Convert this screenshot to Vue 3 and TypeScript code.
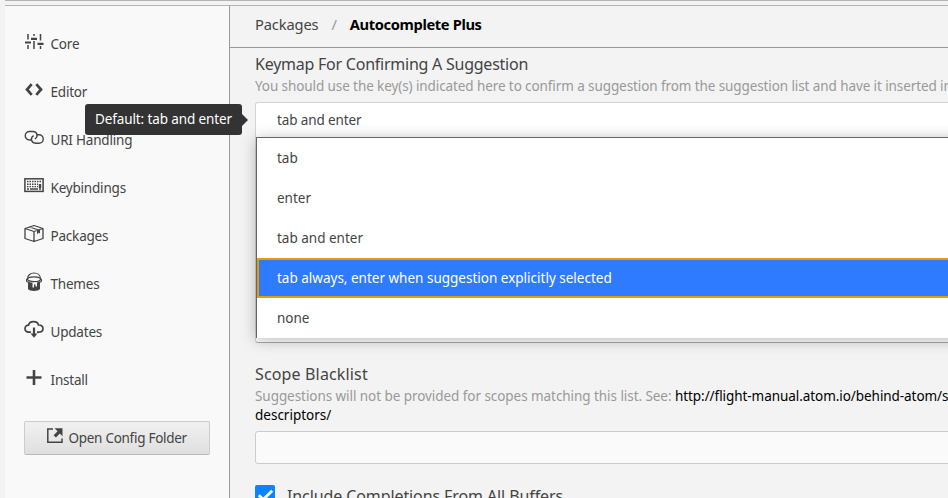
<script setup lang="ts">
interface NavItem {
  id: string
  label: string
}

const navItems: NavItem[] = [
  { id: 'core', label: 'Core' },
  { id: 'editor', label: 'Editor' },
  { id: 'uri', label: 'URI Handling' },
  { id: 'keys', label: 'Keybindings' },
  { id: 'packages', label: 'Packages' },
  { id: 'themes', label: 'Themes' },
  { id: 'updates', label: 'Updates' },
  { id: 'install', label: 'Install' },
]

const options: string[] = [
  'tab',
  'enter',
  'tab and enter',
  'tab always, enter when suggestion explicitly selected',
  'none',
]
const highlighted = 3
</script>

<template>
  <div class="window">
    <div class="topbar"></div>
    <div class="body">
      <aside class="sidebar">
        <nav class="menu">
          <a v-for="item in navItems" :key="item.id" class="menu-item">
            <svg class="icon" width="20" height="20" viewBox="0 0 20 20" fill="none" stroke="currentColor">
              <g v-if="item.id === 'core'">
                <path d="M4 2v5.500M4 13v4M10 2v2M10 9v8M16.500 2v6.500M16.500 14v3" stroke-width="1.500" />
                <path d="M1 10.500h6M7 6.800h6M13.500 11.800h6" stroke-width="2.200" />
              </g>
              <path v-else-if="item.id === 'editor'" d="M7.700 4.200L3 9.500l4.700 5.300M12.300 4.200L17 9.500l-4.700 5.300" stroke-width="2.700" />
              <g v-else-if="item.id === 'uri'" stroke-width="1.400">
                <path d="M7 12H5.500a4.200 4.200 0 0 1 0-8.500H9c4.500 0 5.500 5.500 1.800 7.500" />
                <path d="M13 6.700h2a4.200 4.200 0 0 1 0 8.500h-3.500c-4.500 0-5.500-5.500-1.800-7.500" />
              </g>
              <g v-else-if="item.id === 'keys'">
                <rect x="0.900" y="2.800" width="18.200" height="12.600" stroke-width="1.500" />
                <path d="M3 5.500h14M3 8.300h11" stroke-width="1.600" stroke-dasharray="1.500 1" />
                <path d="M3 10.700h11" stroke-width="1.200" stroke-dasharray="1.500 1" />
                <path d="M3 13h2M6 13h8M15 13h2" stroke-width="1.300" />
                <path d="M16 8v4" stroke-width="2.400" />
              </g>
              <g v-else-if="item.id === 'packages'" stroke-width="1.300" stroke-linejoin="round">
                <path d="M1 4.500l9-3 9 3v10l-9 3-9-3zM1 4.500l9 3 9-3M10 7.500v10M5.500 3l9 3" />
                <path d="M13 6.200l3-.9v4.200l-1.500-.8-1.500 1.600z" fill="currentColor" stroke="none" />
              </g>
              <g v-else-if="item.id === 'themes'" stroke-width="1.200">
                <path d="M3.500 7C3.500 -1 16.500 -1 16.500 7" />
                <ellipse cx="10" cy="7.200" rx="6.500" ry="2.400" />
                <path d="M3.500 6.500C1.800 7.500 2.300 10 4 10M16.500 6.500c1.700 1 1.200 3.500-.5 3.500" />
                <path d="M4 9v8c1.500 2.500 10.500 2.500 12 0V9c-1 1-2.500 1.400-3 1.500v4h-1.500v-2H10v3H8.500v-5C6.500 10.500 5 10 4 9z" fill="currentColor" stroke="none" />
              </g>
              <g v-else-if="item.id === 'updates'" stroke-width="1.700">
                <path d="M7 12.200H4.500a3.500 3.500 0 0 1 0-7C5.500 0.500 13.500 0.500 14.500 5c6-.3 6 7.200 0 7.200H13" />
                <path d="M10 7.500v8" stroke-width="2.200" />
                <path d="M6.500 13.500h7L10 17.800z" fill="currentColor" stroke="none" />
              </g>
              <path v-else d="M10 2v15M2.500 9.500h15" stroke-width="2.600" />
            </svg>
            <span class="menu-label">{{ item.label }}</span>
          </a>
        </nav>
        <button class="config-button">
          <svg class="icon" width="18" height="18" viewBox="0 0 18 18" fill="none" stroke="currentColor">
            <path d="M7 2H1.800v13.200H16V11.500" stroke-width="1.500" />
            <path d="M8.500 1.200h8v8l-2.600-2.600-4 3.900-2.300-2.300 4-3.900z" fill="currentColor" stroke="none" />
          </svg>
          <span class="config-label">Open Config Folder</span>
        </button>
      </aside>

      <main class="panel">
        <header class="breadcrumb">
          <span class="crumb">Packages</span>
          <span class="slash">/</span>
          <span class="current">Autocomplete Plus</span>
        </header>

        <section class="setting keymap">
          <h3 class="title t-keymap">Keymap For Confirming A Suggestion</h3>
          <p class="description d-keymap">You should use the key(s) indicated here to confirm a suggestion from the suggestion list and have it inserted in</p>
          <div class="select-wrap">
            <div class="select"><span>tab and enter</span></div>
            <div class="tooltip"><span>Default: tab and enter</span></div>
            <div class="dropdown">
              <div
                v-for="(option, i) in options"
                :key="option"
                class="option"
                :class="{ active: i === highlighted }"
              ><span>{{ option }}</span></div>
            </div>
          </div>
        </section>

        <section class="setting scope">
          <h3 class="title t-scope">Scope Blacklist</h3>
          <p class="description d-scope">Suggestions will not be provided for scopes matching this list. See: <a class="link">http://flight-manual.atom.io/behind-atom/s</a></p>
          <p class="description"><a class="link">descriptors/</a></p>
          <div class="text-input"></div>
        </section>

        <label class="check-row">
          <span class="checkbox">
            <svg width="20" height="20" viewBox="0 0 20 20" fill="none" stroke="#fff">
              <path d="M3.800 10.200l4.400 4.300 9-8.800" stroke-width="2.800" />
            </svg>
          </span>
          <span class="title t-check">Include Completions From All Buffers</span>
        </label>
      </main>
    </div>
  </div>
</template>

<style>
body {
  overflow: hidden;
}
</style>

<style scoped>
.window {
  box-sizing: border-box;
  width: 948px;
  height: 498px;
  padding-left: 5px;
  overflow: hidden;
  display: flex;
  flex-direction: column;
  background: #f3f3f3;
  color: #444;
  font-family: "Noto Sans", sans-serif;
  font-size: 13.500px;
}
.topbar {
  flex: none;
  height: 4px;
  border-top: 1px solid #b4b4b4;
  border-bottom: 1px solid #b4b4b4;
}
.body {
  flex: 1;
  min-height: 0;
  display: flex;
}
.sidebar {
  flex: none;
  width: 224px;
  border-right: 1px solid #999;
  background: #f9f9f9;
}
.menu {
  display: flex;
  flex-direction: column;
  padding: 14px 19px 0;
}
.menu-item {
  display: flex;
  align-items: center;
  gap: 6.500px;
  height: 48px;
  letter-spacing: -0.200px;
}
.menu-item .icon {
  margin-top: -4px;
}
.icon {
  flex: none;
  color: #444;
}
.config-button {
  display: flex;
  box-sizing: border-box;
  width: 186px;
  height: 34px;
  margin: 17px 0 0 19px;
  padding: 0 0 0 21px;
  align-items: center;
  gap: 4.500px;
  border: 1px solid #ccc;
  border-bottom-color: #b9b9b9;
  border-radius: 2px;
  background: linear-gradient(#f1f1f1, #dfdfdf);
  color: #444;
  font: inherit;
  letter-spacing: -0.280px;
  white-space: nowrap;
}
.config-button .icon {
  margin-top: -4px;
}
.panel {
  flex: 1;
  min-width: 0;
  white-space: nowrap;
}
.breadcrumb {
  box-sizing: border-box;
  height: 42px;
  padding: 0 0 5px 25px;
  display: flex;
  align-items: center;
  border-bottom: 1px solid #999;
  font-size: 14.700px;
  letter-spacing: -0.150px;
}
.slash {
  margin: 0 13px;
  color: #999;
}
.current {
  color: #000;
  font-weight: 700;
  letter-spacing: -0.370px;
}
.setting {
  padding-left: 25px;
}
.title {
  margin: 0;
  font-size: 16px;
  font-weight: 400;
  line-height: 24px;
}
.t-keymap {
  letter-spacing: -0.240px;
}
.t-scope {
  letter-spacing: 0.150px;
}
.t-check {
  margin-top: -1px;
  letter-spacing: -0.100px;
}
.keymap {
  padding-top: 4px;
}
.description {
  margin: 0;
  color: #999;
  line-height: 19px;
}
.d-keymap {
  padding-top: 1px;
  letter-spacing: -0.095px;
}
.d-scope {
  padding-top: 1px;
  letter-spacing: -0.060px;
}
.link {
  color: #000;
}
.select-wrap {
  position: relative;
  width: 800px;
  margin-top: 6px;
}
.select {
  box-sizing: border-box;
  height: 241px;
  padding: 8px 21px;
  border: 1px solid #d3d3d3;
  border-bottom-color: #aaa;
  border-radius: 3px;
  background: #fff;
  line-height: 18px;
  letter-spacing: -0.120px;
}
.tooltip {
  position: absolute;
  left: -170px;
  top: 2px;
  width: 157px;
  height: 31px;
  box-sizing: border-box;
  padding-left: 10px;
  border-radius: 3px;
  background: #333;
  color: #fff;
  line-height: 30px;
  letter-spacing: -0.120px;
}
.tooltip::after {
  content: "";
  position: absolute;
  left: 157px;
  top: 10px;
  border: 6px solid transparent;
  border-left-color: #333;
  border-right: 0;
}
.dropdown {
  position: absolute;
  left: 1px;
  top: 35px;
  width: 798px;
  height: 200px;
  border-left: 1px solid #666;
  border-top: 1px solid #666;
  background: #fff;
  box-shadow: 0 2px 14px rgba(0, 0, 0, 0.28);
}
.option {
  box-sizing: border-box;
  height: 40px;
  padding-left: 20px;
  line-height: 40px;
}
.option.active {
  padding-left: 18px;
  border: 2px solid #e99a08;
  background: #2e7bff;
  color: #fff;
  line-height: 36px;
}
.scope {
  padding-top: 19px;
}
.text-input {
  box-sizing: border-box;
  width: 800px;
  height: 33px;
  margin-top: 6px;
  border: 1px solid #ccc;
  border-radius: 3px;
  background: #fafafa;
}
.check-row {
  display: flex;
  padding: 21px 0 0 25px;
  gap: 12px;
}
.checkbox {
  width: 20px;
  height: 20px;
  border-radius: 2px;
  background: #0c83ff;
}
</style>
